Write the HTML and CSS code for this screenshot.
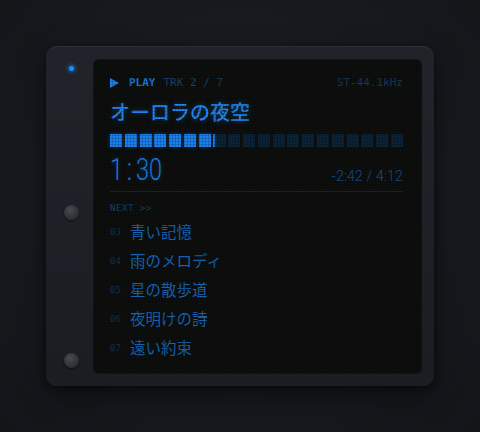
FILE: index.html
```
<!doctype html>
<html lang="ja">
<head>
  <meta charset="UTF-8">
  <title>オーロラの夜空</title>
  <link rel="stylesheet" href="styles.css">
  <script type="text/javascript">
  window.onload=function(){
    var bar=document.getElementById('bar'),
        pos=90,      /*1:30*/
        total=252,   /*4:12*/
        segs=20;
    /*按进度生成分段*/
    var filled=pos/total*segs;
    for(var i=0;i<segs;i++){
      var seg=document.createElement('div');
      seg.className='seg';
      var fill=document.createElement('span');
      var f=Math.max(0,Math.min(1,filled-i));
      fill.style.width=(f*100)+'%';
      seg.appendChild(fill);
      bar.appendChild(seg);
    }
  }
  </script>
</head>
<body>
  <div class="deck">
    <div class="rail">
      <span class="led"></span>
      <span class="screw"></span>
      <span class="screw"></span>
    </div>
    <div class="screen">
      <div class="status">
        <span class="state">
          <svg width="9" height="10" viewBox="0 0 9 10"><polygon points="0,0 9,5 0,10" fill="#1c82ec"/></svg>
          <b>PLAY</b>
          <em>TRK 2 / 7</em>
        </span>
        <span class="fmt">ST-44.1kHz</span>
      </div>
      <h1 class="title">オーロラの夜空</h1>
      <div class="bar" id="bar"></div>
      <div class="times">
        <span class="now">1<span class="colon">:</span>30</span>
        <span class="left">-2:42 / 4:12</span>
      </div>
      <div class="next">NEXT &gt;&gt;</div>
      <ul class="queue">
        <li><i>03</i>青い記憶</li>
        <li><i>04</i>雨のメロディ</li>
        <li><i>05</i>星の散歩道</li>
        <li><i>06</i>夜明けの詩</li>
        <li><i>07</i>遠い約束</li>
      </ul>
    </div>
  </div>
</body>
</html>
```
FILE: styles.css
```
*{margin:0;
  padding:0;
  list-style:none;
  box-sizing:border-box;}
html,body{height:100%;}
body{display:flex;
     align-items:center;
     justify-content:center;
     background:radial-gradient(ellipse at 50% 45%,#1c1f25 0%,#17191e 60%,#131519 100%);
     font-family:"DejaVu Sans Mono",monospace;}

/*机身*/
.deck{width:388px;
      height:340px;
      display:flex;
      padding:14px 13px 13px 0;
      border-radius:11px;
      background:linear-gradient(180deg,#202329 0%,#1b1d23 100%);
      box-shadow:0 1px 0 rgba(255,255,255,.05) inset,0 10px 30px rgba(0,0,0,.45),0 2px 6px rgba(0,0,0,.4);}
.rail{width:48px;
      display:flex;
      flex-direction:column;
      align-items:center;}
.led{width:5px; height:5px;
     margin-top:6px;
     margin-left:2px;
     border-radius:50%;
     background:#1e8cff;
     box-shadow:0 0 4px 1px rgba(30,140,255,.6);}
.screw{width:15px; height:15px;
       border-radius:50%;
       margin-left:3px;
       background:radial-gradient(circle at 40% 35%,#484b51 0%,#34373c 45%,#24262a 100%);
       box-shadow:0 1px 2px rgba(0,0,0,.6);}
.led + .screw{margin-top:134px;}
.screw + .screw{margin-top:133px;}

/*屏幕*/
.screen{flex:1;
        position:relative;
        padding:16px 18px 0 16px;
        border-radius:5px;
        background-color:#0a0c0a;
        background-image:linear-gradient(rgba(255,255,255,.02) 1px,transparent 1px),
                         linear-gradient(90deg,rgba(255,255,255,.02) 1px,transparent 1px);
        background-size:3px 3px;
        box-shadow:0 0 0 1px rgba(0,0,0,.5),0 1px 0 rgba(255,255,255,.04);
        overflow:hidden;}
/*像素格子盖在文字上面*/
.screen:after{content:'';
              position:absolute;
              left:0; top:0; right:0; bottom:0;
              background-image:linear-gradient(rgba(0,0,0,.16) 1px,transparent 1px),
                               linear-gradient(90deg,rgba(0,0,0,.16) 1px,transparent 1px);
              background-size:3px 3px;
              pointer-events:none;}

.status{display:flex;
        justify-content:space-between;
        align-items:center;
        height:14px;
        font-size:11px;
        line-height:14px;}
.state{display:flex; align-items:center;}
.state svg{margin-right:10px;}
.state b{color:#1a78d8; margin-right:8px;}
.state em{font-style:normal; color:#154672;}
.fmt{color:#143c64;}

.title{margin-top:10px;
       font:500 20px/24px "Noto Sans CJK JP",sans-serif;
       color:#2289f2;
       text-shadow:0 0 6px rgba(34,137,242,.35);}

.bar{display:flex;
     gap:2.7px;
     height:13px;
     margin-top:10px;}
.seg{flex:1;
     background:#0c2236;}
.seg span{display:block;
          height:100%;
          background:#1c80ea;
          box-shadow:0 0 4px rgba(28,128,234,.4);}

/*时间用细体数字*/
.times{display:flex;
       justify-content:space-between;
       align-items:flex-end;
       height:45px;
       padding-bottom:6px;
       border-bottom:1px solid #0d2740;
       font-family:Roboto,sans-serif;
       font-weight:300;
       font-variant-numeric:tabular-nums;}
.now{font-size:31px;
     line-height:30px;
     color:#1e80e4;
     transform:scaleX(.76);
     transform-origin:left bottom;
     text-shadow:0 0 6px rgba(30,128,228,.35);}
.now .colon{display:inline-block;
            width:17px;
            text-align:center;}
.left{font-size:14px;
      line-height:14px;
      margin-bottom:2px;
      letter-spacing:.2px;
      color:#17589c;}

.next{margin-top:10px;
      font-size:9px;
      line-height:12px;
      letter-spacing:.6px;
      color:#17466f;}

.queue{margin-top:3px;}
.queue li{display:flex;
          align-items:center;
          height:29px;
          font:15.5px/29px "Noto Sans CJK JP",sans-serif;
          color:#1766b8;}
.queue i{width:20px;
         font:normal 9px "DejaVu Sans Mono",monospace;
         color:#0f3355;}
```
